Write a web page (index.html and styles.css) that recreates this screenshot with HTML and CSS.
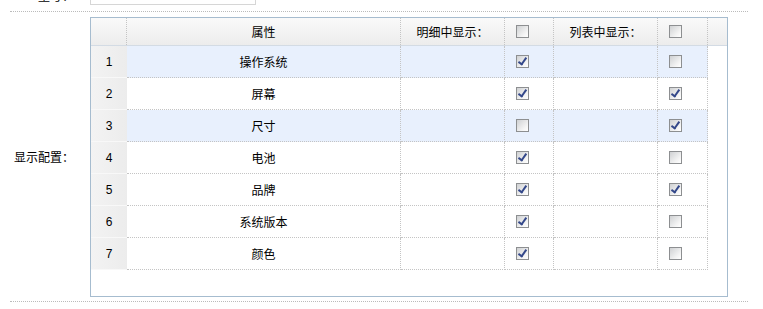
FILE: index.html
```html
<!DOCTYPE html>
<html lang="zh-CN">
<head>
  <meta charset="UTF-8" />
  <title>显示配置</title>
  <link rel="stylesheet" href="styles.css">
</head>
<body>

  <div class="form">
    <div class="form-row row-cut">
      <label class="form-label">型号：</label>
      <div class="form-field">
        <input type="text" class="text-input" />
      </div>
    </div>

    <div class="form-row">
      <label class="form-label">显示配置：</label>
      <div class="form-field">
        <div class="grid-panel">
          <div class="grid-head">
            <div class="cell col-idx"></div>
            <div class="cell col-name">属性</div>
            <div class="cell col-text">明细中显示：</div>
            <div class="cell col-check"><span class="cb"></span></div>
            <div class="cell col-text">列表中显示：</div>
            <div class="cell col-check"><span class="cb"></span></div>
            <div class="cell col-spacer"></div>
          </div>

          <div class="grid-body">
            <div class="grid-row selected">
              <div class="cell col-idx">1</div>
              <div class="cell col-name">操作系统</div>
              <div class="cell col-text"></div>
              <div class="cell col-check"><span class="cb checked"></span></div>
              <div class="cell col-text"></div>
              <div class="cell col-check"><span class="cb"></span></div>
            </div>
            <div class="grid-row">
              <div class="cell col-idx">2</div>
              <div class="cell col-name">屏幕</div>
              <div class="cell col-text"></div>
              <div class="cell col-check"><span class="cb checked"></span></div>
              <div class="cell col-text"></div>
              <div class="cell col-check"><span class="cb checked"></span></div>
            </div>
            <div class="grid-row selected">
              <div class="cell col-idx">3</div>
              <div class="cell col-name">尺寸</div>
              <div class="cell col-text"></div>
              <div class="cell col-check"><span class="cb"></span></div>
              <div class="cell col-text"></div>
              <div class="cell col-check"><span class="cb checked"></span></div>
            </div>
            <div class="grid-row">
              <div class="cell col-idx">4</div>
              <div class="cell col-name">电池</div>
              <div class="cell col-text"></div>
              <div class="cell col-check"><span class="cb checked"></span></div>
              <div class="cell col-text"></div>
              <div class="cell col-check"><span class="cb"></span></div>
            </div>
            <div class="grid-row">
              <div class="cell col-idx">5</div>
              <div class="cell col-name">品牌</div>
              <div class="cell col-text"></div>
              <div class="cell col-check"><span class="cb checked"></span></div>
              <div class="cell col-text"></div>
              <div class="cell col-check"><span class="cb checked"></span></div>
            </div>
            <div class="grid-row">
              <div class="cell col-idx">6</div>
              <div class="cell col-name">系统版本</div>
              <div class="cell col-text"></div>
              <div class="cell col-check"><span class="cb checked"></span></div>
              <div class="cell col-text"></div>
              <div class="cell col-check"><span class="cb"></span></div>
            </div>
            <div class="grid-row">
              <div class="cell col-idx">7</div>
              <div class="cell col-name">颜色</div>
              <div class="cell col-text"></div>
              <div class="cell col-check"><span class="cb checked"></span></div>
              <div class="cell col-text"></div>
              <div class="cell col-check"><span class="cb"></span></div>
            </div>
          </div>
        </div>
      </div>
    </div>
  </div>

</body>
</html>
```

FILE: styles.css
```css
body {
  margin: 0;
  font-family: "Noto Sans CJK SC", "Liberation Sans", sans-serif;
  font-size: 12px;
  color: #000;
  background: #fff;
}

.form {
  margin-left: 10px;
  width: 738px;
}

.form-row {
  display: flex;
  align-items: center;
  padding: 5px 0 4px;
  border-bottom: 1px dotted #bbb;
}

.form-label {
  width: 80px;
  padding-right: 16px;
  box-sizing: border-box;
  text-align: right;
  line-height: 14px;
}

.row-cut {
  margin-top: -20px;
  padding: 0 0 6px;
  align-items: flex-start;
}

.row-cut .form-label {
  padding-top: 9px;
}

.text-input {
  display: block;
  width: 166px;
  height: 25px;
  box-sizing: border-box;
  margin: 0;
  border: 1px solid #d6d6d6;
  background: #fff;
}

/* grid */

.grid-panel {
  width: 638px;
  height: 280px;
  box-sizing: border-box;
  border: 1px solid #a6bccf;
  background: #fff;
}

.grid-head,
.grid-row {
  display: flex;
}

.grid-head {
  height: 28px;
  border-bottom: 1px solid #d3dbe4;
  box-sizing: border-box;
  background: linear-gradient(#fafafa, #ececec);
}

.grid-row {
  height: 32px;
}

.cell {
  box-sizing: border-box;
  display: flex;
  align-items: center;
  justify-content: center;
  line-height: 14px;
  border-right: 1px dotted #c4c4c4;
}

.grid-row .cell {
  border-bottom: 1px dotted #c4c4c4;
}

.col-idx { width: 36px; }
.col-name { width: 274px; }
.col-text { width: 104px; }
.col-check {
  width: 49px;
  justify-content: flex-start;
  padding-left: 11px;
}
.col-check:last-child,
.grid-head .col-check:nth-child(6) {
  width: 50px;
}
.col-spacer {
  width: 19px;
  border-right: none;
}

.grid-row .col-idx {
  font-family: "Liberation Sans", sans-serif;
  font-size: 12px;
  background: linear-gradient(to right, #f3f3f3, #ececec);
  border-right: none;
  border-bottom: 1px solid #f8f8f8;
}

.grid-row.selected .cell {
  background-color: #e8f0fd;
}

.grid-row.selected .col-idx {
  background: linear-gradient(to right, #f3f3f3, #ececec);
}

/* checkbox */

.cb {
  position: relative;
  display: block;
  width: 13px;
  height: 13px;
  box-sizing: border-box;
  border: 1px solid #8d8f91;
  background: linear-gradient(135deg, #cfd1d3, #f4f4f4 70%, #fff);
}

.cb.checked::after {
  content: "";
  position: absolute;
  left: 3px;
  top: 0;
  width: 3px;
  height: 7px;
  border-right: 2px solid #34488a;
  border-bottom: 2px solid #34488a;
  transform: rotate(35deg);
}
```
